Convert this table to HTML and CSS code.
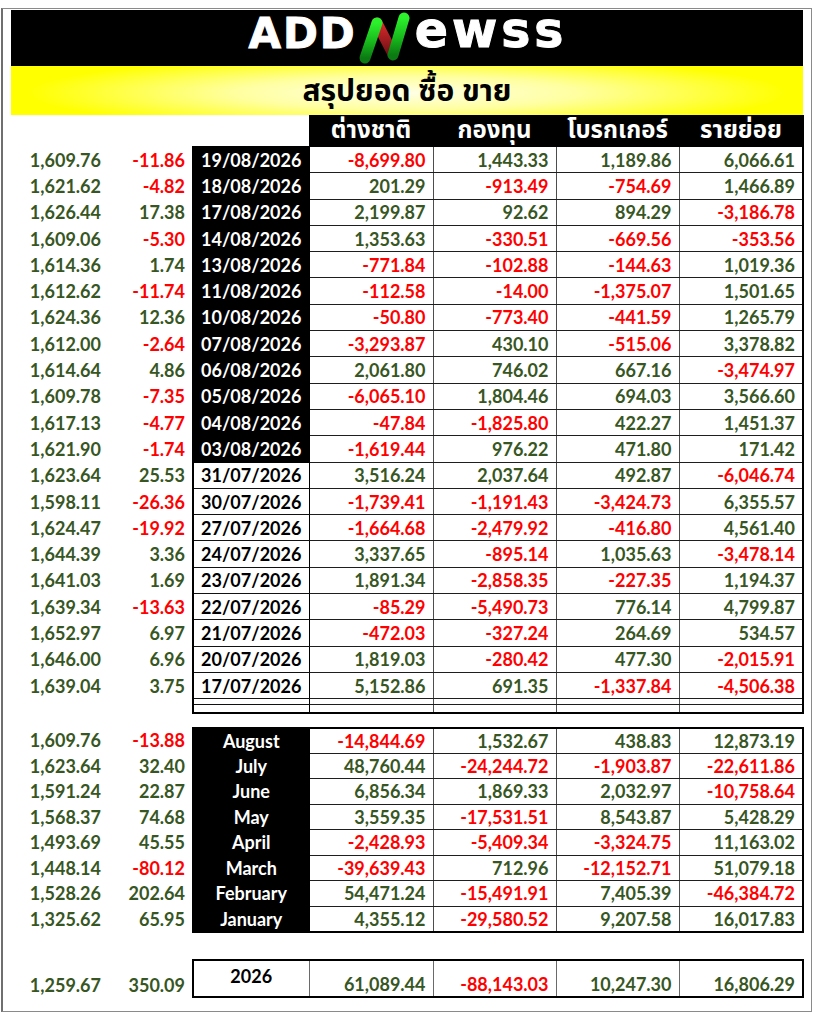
FILE: index.html
```html
<!DOCTYPE html>
<html lang="th">
<head>
<meta charset="utf-8">
<title>ADDNewss สรุปยอด ซื้อ ขาย</title>
<link rel="stylesheet" href="styles.css">
</head>
<body>
<div class="frame">
  <div class="logo-bar">
    <div class="logo">
      <span class="logo-add">ADD</span>
      <svg class="logo-n" viewBox="0 0 60 56" width="60" height="56" aria-hidden="true">
        <defs>
          <linearGradient id="gl" x1="0" y1="1" x2="0" y2="0">
            <stop offset="0" stop-color="#0b7a12"/>
            <stop offset="0.45" stop-color="#17b81c"/>
            <stop offset="1" stop-color="#2cf02c"/>
          </linearGradient>
          <linearGradient id="gr" x1="0" y1="0" x2="0" y2="1">
            <stop offset="0" stop-color="#d92a2a"/>
            <stop offset="1" stop-color="#6e1016"/>
          </linearGradient>
        </defs>
        <line x1="22" y1="13" x2="38" y2="44" stroke="url(#gr)" stroke-width="11" stroke-linecap="round"/>
        <line x1="10" y1="48" x2="22" y2="13" stroke="url(#gl)" stroke-width="11" stroke-linecap="round"/>
        <line x1="38" y1="45" x2="49" y2="8" stroke="url(#gl)" stroke-width="11" stroke-linecap="round"/>
      </svg>
      <span class="logo-ewss">ewss</span>
    </div>
  </div>
  <div class="title-bar">สรุปยอด ซื้อ ขาย</div>

  <table class="grid daily">
    <colgroup><col class="c-a"><col class="c-b"><col class="c-c"><col class="c-d"><col class="c-e"><col class="c-f"><col class="c-g"></colgroup>
    <tr class="head">
      <td class="e"></td><td class="e"></td><td class="e"></td>
      <td class="h">ต่างชาติ</td><td class="h">กองทุน</td><td class="h">โบรกเกอร์</td><td class="h">รายย่อย</td>
    </tr>
    <tr><td class="i">1,609.76</td><td class="i neg">-11.86</td><td class="d blk">19/08/2026</td><td class="v neg">-8,699.80</td><td class="v">1,443.33</td><td class="v">1,189.86</td><td class="v last">6,066.61</td></tr>
    <tr><td class="i">1,621.62</td><td class="i neg">-4.82</td><td class="d blk">18/08/2026</td><td class="v">201.29</td><td class="v neg">-913.49</td><td class="v neg">-754.69</td><td class="v last">1,466.89</td></tr>
    <tr><td class="i">1,626.44</td><td class="i">17.38</td><td class="d blk">17/08/2026</td><td class="v">2,199.87</td><td class="v">92.62</td><td class="v">894.29</td><td class="v last neg">-3,186.78</td></tr>
    <tr><td class="i">1,609.06</td><td class="i neg">-5.30</td><td class="d blk">14/08/2026</td><td class="v">1,353.63</td><td class="v neg">-330.51</td><td class="v neg">-669.56</td><td class="v last neg">-353.56</td></tr>
    <tr><td class="i">1,614.36</td><td class="i">1.74</td><td class="d blk">13/08/2026</td><td class="v neg">-771.84</td><td class="v neg">-102.88</td><td class="v neg">-144.63</td><td class="v last">1,019.36</td></tr>
    <tr><td class="i">1,612.62</td><td class="i neg">-11.74</td><td class="d blk">11/08/2026</td><td class="v neg">-112.58</td><td class="v neg">-14.00</td><td class="v neg">-1,375.07</td><td class="v last">1,501.65</td></tr>
    <tr><td class="i">1,624.36</td><td class="i">12.36</td><td class="d blk">10/08/2026</td><td class="v neg">-50.80</td><td class="v neg">-773.40</td><td class="v neg">-441.59</td><td class="v last">1,265.79</td></tr>
    <tr><td class="i">1,612.00</td><td class="i neg">-2.64</td><td class="d blk">07/08/2026</td><td class="v neg">-3,293.87</td><td class="v">430.10</td><td class="v neg">-515.06</td><td class="v last">3,378.82</td></tr>
    <tr><td class="i">1,614.64</td><td class="i">4.86</td><td class="d blk">06/08/2026</td><td class="v">2,061.80</td><td class="v">746.02</td><td class="v">667.16</td><td class="v last neg">-3,474.97</td></tr>
    <tr><td class="i">1,609.78</td><td class="i neg">-7.35</td><td class="d blk">05/08/2026</td><td class="v neg">-6,065.10</td><td class="v">1,804.46</td><td class="v">694.03</td><td class="v last">3,566.60</td></tr>
    <tr><td class="i">1,617.13</td><td class="i neg">-4.77</td><td class="d blk">04/08/2026</td><td class="v neg">-47.84</td><td class="v neg">-1,825.80</td><td class="v">422.27</td><td class="v last">1,451.37</td></tr>
    <tr><td class="i">1,621.90</td><td class="i neg">-1.74</td><td class="d blk">03/08/2026</td><td class="v neg">-1,619.44</td><td class="v">976.22</td><td class="v">471.80</td><td class="v last">171.42</td></tr>
    <tr><td class="i">1,623.64</td><td class="i">25.53</td><td class="d">31/07/2026</td><td class="v">3,516.24</td><td class="v">2,037.64</td><td class="v">492.87</td><td class="v last neg">-6,046.74</td></tr>
    <tr><td class="i">1,598.11</td><td class="i neg">-26.36</td><td class="d">30/07/2026</td><td class="v neg">-1,739.41</td><td class="v neg">-1,191.43</td><td class="v neg">-3,424.73</td><td class="v last">6,355.57</td></tr>
    <tr><td class="i">1,624.47</td><td class="i neg">-19.92</td><td class="d">27/07/2026</td><td class="v neg">-1,664.68</td><td class="v neg">-2,479.92</td><td class="v neg">-416.80</td><td class="v last">4,561.40</td></tr>
    <tr><td class="i">1,644.39</td><td class="i">3.36</td><td class="d">24/07/2026</td><td class="v">3,337.65</td><td class="v neg">-895.14</td><td class="v">1,035.63</td><td class="v last neg">-3,478.14</td></tr>
    <tr><td class="i">1,641.03</td><td class="i">1.69</td><td class="d">23/07/2026</td><td class="v">1,891.34</td><td class="v neg">-2,858.35</td><td class="v neg">-227.35</td><td class="v last">1,194.37</td></tr>
    <tr><td class="i">1,639.34</td><td class="i neg">-13.63</td><td class="d">22/07/2026</td><td class="v neg">-85.29</td><td class="v neg">-5,490.73</td><td class="v">776.14</td><td class="v last">4,799.87</td></tr>
    <tr><td class="i">1,652.97</td><td class="i">6.97</td><td class="d">21/07/2026</td><td class="v neg">-472.03</td><td class="v neg">-327.24</td><td class="v">264.69</td><td class="v last">534.57</td></tr>
    <tr><td class="i">1,646.00</td><td class="i">6.96</td><td class="d">20/07/2026</td><td class="v">1,819.03</td><td class="v neg">-280.42</td><td class="v">477.30</td><td class="v last neg">-2,015.91</td></tr>
    <tr><td class="i">1,639.04</td><td class="i">3.75</td><td class="d">17/07/2026</td><td class="v">5,152.86</td><td class="v">691.35</td><td class="v neg">-1,337.84</td><td class="v last neg">-4,506.38</td></tr>
    <tr class="thin1"><td class="e"></td><td class="e"></td><td class="d"></td><td class="v"></td><td class="v"></td><td class="v"></td><td class="v last"></td></tr>
    <tr class="thin2"><td class="e"></td><td class="e"></td><td class="d"></td><td class="v"></td><td class="v"></td><td class="v"></td><td class="v last"></td></tr>
  </table>

  <table class="grid monthly">
    <colgroup><col class="c-a"><col class="c-b"><col class="c-c"><col class="c-d"><col class="c-e"><col class="c-f"><col class="c-g"></colgroup>
    <tr><td class="i">1,609.76</td><td class="i neg">-13.88</td><td class="d blk">August</td><td class="v neg">-14,844.69</td><td class="v">1,532.67</td><td class="v">438.83</td><td class="v last">12,873.19</td></tr>
    <tr><td class="i">1,623.64</td><td class="i">32.40</td><td class="d blk">July</td><td class="v">48,760.44</td><td class="v neg">-24,244.72</td><td class="v neg">-1,903.87</td><td class="v last neg">-22,611.86</td></tr>
    <tr><td class="i">1,591.24</td><td class="i">22.87</td><td class="d blk">June</td><td class="v">6,856.34</td><td class="v">1,869.33</td><td class="v">2,032.97</td><td class="v last neg">-10,758.64</td></tr>
    <tr><td class="i">1,568.37</td><td class="i">74.68</td><td class="d blk">May</td><td class="v">3,559.35</td><td class="v neg">-17,531.51</td><td class="v">8,543.87</td><td class="v last">5,428.29</td></tr>
    <tr><td class="i">1,493.69</td><td class="i">45.55</td><td class="d blk">April</td><td class="v neg">-2,428.93</td><td class="v neg">-5,409.34</td><td class="v neg">-3,324.75</td><td class="v last">11,163.02</td></tr>
    <tr><td class="i">1,448.14</td><td class="i neg">-80.12</td><td class="d blk">March</td><td class="v neg">-39,639.43</td><td class="v">712.96</td><td class="v neg">-12,152.71</td><td class="v last">51,079.18</td></tr>
    <tr><td class="i">1,528.26</td><td class="i">202.64</td><td class="d blk">February</td><td class="v">54,471.24</td><td class="v neg">-15,491.91</td><td class="v">7,405.39</td><td class="v last neg">-46,384.72</td></tr>
    <tr class="endrow"><td class="i">1,325.62</td><td class="i">65.95</td><td class="d blk">January</td><td class="v">4,355.12</td><td class="v neg">-29,580.52</td><td class="v">9,207.58</td><td class="v last">16,017.83</td></tr>
  </table>

  <table class="grid total">
    <colgroup><col class="c-a"><col class="c-b"><col class="c-c"><col class="c-d"><col class="c-e"><col class="c-f"><col class="c-g"></colgroup>
    <tr><td class="i">1,259.67</td><td class="i">350.09</td><td class="d yr">2026</td><td class="v">61,089.44</td><td class="v neg">-88,143.03</td><td class="v">10,247.30</td><td class="v last">16,806.29</td></tr>
  </table>
</div>
</body>
</html>
```

FILE: styles.css
```css
html, body {
  margin: 0;
  padding: 0;
  background: #ffffff;
}

.frame {
  margin: 8px 3px 0 1px;
  border: 1px solid #8a8a8a;
  border-left: 2px solid #6f6f6f;
  padding: 1px 8px 0 8px;
  height: 1004px;
  box-sizing: border-box;
  font-family: Lato, "Open Sans", sans-serif;
}

.logo-bar {
  height: 56px;
  background: #000;
  display: flex;
  align-items: center;
  justify-content: center;
}

.logo {
  display: flex;
  align-items: flex-end;
  height: 56px;
  padding-left: 2px;
}

.logo-add,
.logo-ewss {
  font-family: "DejaVu Sans", sans-serif;
  font-weight: 700;
  color: #fff;
  line-height: 1;
  -webkit-text-stroke: 1px #fff;
  paint-order: stroke fill;
}

.logo-add {
  font-size: 42px;
  letter-spacing: 2px;
  margin-bottom: 11px;
}

.logo-ewss {
  font-size: 49px;
  letter-spacing: 4px;
  margin-bottom: 11px;
}

.logo-n {
  display: block;
  margin-left: -2px;
}

.title-bar {
  height: 49px;
  background: radial-gradient(ellipse 48% 75% at 50% 55%, #ffffe6 0%, #ffffa0 45%, #ffff00 100%);
  display: flex;
  align-items: center;
  justify-content: center;
  font-family: Tahoma, "Noto Sans Thai", "Leelawadee UI", Loma, Garuda, "DejaVu Sans", sans-serif;
  font-weight: 700;
  font-size: 30px;
  line-height: 44px;
  color: #000;
  padding-top: 2px;
  box-sizing: border-box;
}

.grid {
  border-collapse: collapse;
  table-layout: fixed;
  width: 792px;
  font-family: Lato, "Open Sans", sans-serif;
  font-weight: 700;
  font-size: 18px;
}

.c-a { width: 94px; }
.c-b { width: 88px; }
.c-c { width: 116px; }
.c-d { width: 124px; }
.c-e { width: 123px; }
.c-f { width: 123px; }
.c-g { width: 124px; }

.grid td {
  padding: 0 7px 0 0;
  text-align: right;
  white-space: nowrap;
  color: #375623;
  line-height: 1;
}

.grid td.neg { color: #ff0000; }

.grid td.i { padding-right: 4px; }
.grid td.i + td.i { padding-right: 7px; }

.daily tr { height: 26.3px; }
.daily tr.head { height: 31px; }
.daily tr.thin1 { height: 6px; }
.daily tr.thin2 { height: 8px; }

.grid td.h {
  background: #000;
  color: #fff;
  text-align: center;
  vertical-align: bottom;
  padding: 0 0 1px 0;
  font-family: Tahoma, "Noto Sans Thai", "Leelawadee UI", Loma, Garuda, "DejaVu Sans", sans-serif;
  font-size: 24px;
  line-height: 27px;
  font-weight: 700;
  border: 1px solid #000;
}

.grid td.d {
  text-align: center;
  padding: 0;
  color: #000;
  border-left: 2px solid #000;
  border-right: 1px solid #000;
  border-top: 1px solid #111;
  border-bottom: 1px solid #111;
}

.grid td.d.blk {
  background: #000;
  color: #fff;
  border-color: #000;
}

.grid td.v {
  border-top: 1px solid #1e1e1e;
  border-bottom: 1px solid #1e1e1e;
  border-left: 1px solid #4d4d4d;
  border-right: 1px solid #4d4d4d;
}

.grid td.v.last {
  border-right: 2px solid #000;
  padding-right: 7px;
}

.daily tr.thin2 td.d,
.daily tr.thin2 td.v {
  border-bottom: 2px solid #000;
}

.monthly {
  margin-top: 13px;
}

.monthly tr { height: 25.5px; }

.monthly tr:first-child td.d,
.monthly tr:first-child td.v {
  border-top: 2px solid #000;
}

.monthly tr.endrow td.d,
.monthly tr.endrow td.v {
  border-bottom: 2px solid #000;
}

.total {
  margin-top: 26px;
}

.total tr { height: 37px; }

.total td.i,
.total td.v {
  vertical-align: bottom;
  padding-bottom: 3px;
}

.total td.d.yr {
  vertical-align: middle;
  padding-bottom: 4px;
  border: 2px solid #000;
  border-right: 1px solid #6a6a6a;
}

.total td.v {
  border-top: 2px solid #000;
  border-bottom: 2px solid #000;
  border-left: 1px solid #6a6a6a;
  border-right: 1px solid #6a6a6a;
}

.total td.v.last {
  border-right: 2px solid #000;
}
```
